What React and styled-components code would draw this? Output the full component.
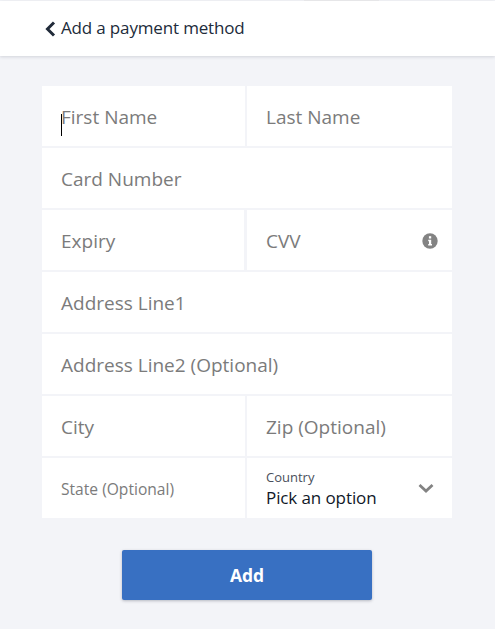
import React from 'react';
import styled, { createGlobalStyle } from 'styled-components';

const GlobalStyle = createGlobalStyle`
    html, body {
        margin: 0;
        padding: 0;
        background: #f3f4f8;
        font-family: "Open Sans", "Noto Sans", "Liberation Sans", sans-serif;
    }
`
const Page = styled.div`
    width: 495px;
    height: 629px;
    overflow: hidden;
    display: flex;
    flex-direction: column;
    position: relative;
`
const TopMark = styled.div`
    position: absolute;
    top: 0;
    left: 304px;
    width: 75px;
    height: 1px;
    background: #e6e6e8;
`
const Header = styled.div`
    width: 100%;
    height: 55px;
    margin-top: 1px;
    padding-left: 44px;
    box-sizing: border-box;
    background: #fff;
    box-shadow: 0 1px 3px rgba(40, 45, 70, 0.16);
    display: flex;
    align-items: center;
    gap: 5px;
    color: #212b3a;
    font-size: 17px;
    letter-spacing: -0.16px;
`
const HeaderTitle = styled.span`
    margin-top: -2px;
`
const Form = styled.div`
    width: 410px;
    margin: 30px 0 0 42px;
    display: flex;
    flex-direction: column;
    gap: 2px;
`
const Row = styled.div`
    display: flex;
    gap: ${p => p.$gap || 2}px;
    height: 60px;
`
const Field = styled.div`
    position: relative;
    flex: ${p => p.$half ? '0 0 auto' : '1 1 0%'};
    width: ${p => p.$half ? `${p.$half}px` : 'auto'};
    box-sizing: border-box;
    padding: 2px 14px 0 19px;
    background: #fff;
    display: flex;
    align-items: center;
    justify-content: space-between;
    color: #7b7b7b;
    font-size: ${p => p.$small ? 15.6 : 19}px;
`
const Caret = styled.div`
    position: absolute;
    left: 19px;
    top: 28px;
    width: 1px;
    height: 22px;
    background: #000;
`
const SelectField = styled(Field)`
    padding: 0 18px 0 19px;
`
const SelectText = styled.div`
    display: flex;
    flex-direction: column;
    margin-top: 3px;
`
const SelectLabel = styled.span`
    color: #4a4f5c;
    font-size: 13px;
    line-height: 15px;
`
const SelectValue = styled.span`
    color: #101828;
    font-size: 17px;
    line-height: 25px;
    letter-spacing: -0.1px;
`
const Actions = styled.div`
    margin: 32px 0 0 122px;
    display: flex;
`
const AddButton = styled.button`
    width: 250px;
    height: 50px;
    border: 0;
    border-radius: 2px;
    background: #3870c2;
    color: #fff;
    font-family: inherit;
    font-size: 17.5px;
    font-weight: 700;
    box-shadow: 0 1px 3px rgba(40, 45, 70, 0.3);
`

const Back = () => (
    <svg width="12" height="18" viewBox="0 0 12 18">
        <path d="M10 2.5 L3.5 9 L10 15.5" fill="none" stroke="#212b3a" strokeWidth="3" />
    </svg>
)
const Info = () => (
    <svg width="16" height="16" viewBox="0 0 16 16">
        <circle cx="8" cy="8" r="7.7" fill="#838383" />
        <rect x="6.9" y="3.2" width="2.3" height="2.3" fill="#fff" />
        <path d="M6.2 6.7 H9.2 V11 H10 V12.6 H6.2 V11 H7 V8.2 H6.2 Z" fill="#fff" />
    </svg>
)
const Chevron = () => (
    <svg width="16" height="11" viewBox="0 0 16 11">
        <path d="M1.5 2 L8 8 L14.5 2" fill="none" stroke="#838383" strokeWidth="2.8" />
    </svg>
)

function App() {
    return (
        <Page>
            <GlobalStyle />
            <TopMark />
            <Header>
                <Back />
                <HeaderTitle>Add a payment method</HeaderTitle>
            </Header>
            <Form>
                <Row>
                    <Field $half={203}>First Name<Caret /></Field>
                    <Field>Last Name</Field>
                </Row>
                <Row>
                    <Field>Card Number</Field>
                </Row>
                <Row $gap={3}>
                    <Field $half={202}>Expiry</Field>
                    <Field>CVV<Info /></Field>
                </Row>
                <Row>
                    <Field>Address Line1</Field>
                </Row>
                <Row>
                    <Field>Address Line2 (Optional)</Field>
                </Row>
                <Row>
                    <Field $half={203}>City</Field>
                    <Field>Zip (Optional)</Field>
                </Row>
                <Row>
                    <Field $half={203} $small>State (Optional)</Field>
                    <SelectField>
                        <SelectText>
                            <SelectLabel>Country</SelectLabel>
                            <SelectValue>Pick an option</SelectValue>
                        </SelectText>
                        <Chevron />
                    </SelectField>
                </Row>
            </Form>
            <Actions>
                <AddButton>Add</AddButton>
            </Actions>
        </Page>
    )
}

export default App;
